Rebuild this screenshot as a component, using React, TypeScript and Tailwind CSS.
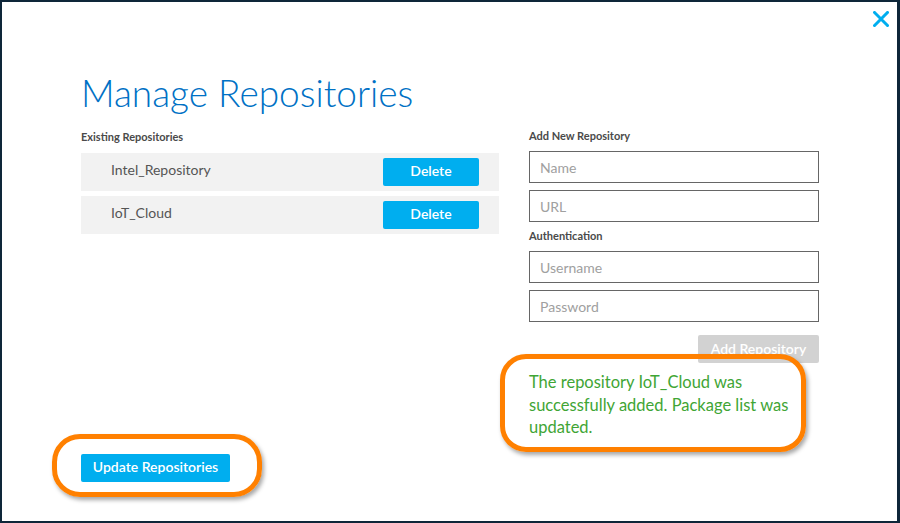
import React from "react";

const font = { fontFamily: "Lato, 'Open Sans', sans-serif" };

function Row({ name }: { name: string }) {
  return (
    <div className="flex h-[38px] items-center justify-between bg-[#f2f2f2] pl-[30px] pr-[20px]">
      <span className="-mt-[6px] text-[14px] text-[#555555]">{name}</span>
      <button className="h-[28px] w-[96px] rounded-[2px] bg-[#00aeef] pb-[3px] text-[14px] font-semibold text-white">
        Delete
      </button>
    </div>
  );
}

function Field({ placeholder }: { placeholder: string }) {
  return (
    <div className="flex h-[32px] items-center border border-[#666666] px-[10px] text-[14px] text-[#a0a0a0]">
      {placeholder}
    </div>
  );
}

export default function App() {
  return (
    <div className="relative h-[523px] w-[900px] bg-[#0e2639] pb-[2px] pl-[2px] pr-[3px] pt-[2px]" style={font}>
      <div className="flex h-full flex-col bg-white pb-[39px] pl-[79px] pt-[69px]">
        <h1 className="text-[37px] font-light leading-[44px] text-[#0071c5]">Manage Repositories</h1>
        <div className="mt-[14px] flex gap-[30px]">
          <div className="w-[418px]">
            <div className="text-[11px] font-bold leading-[16px] text-[#4a4a4a]">Existing Repositories</div>
            <div className="mt-[8px] flex flex-col gap-[5px]">
              <Row name="Intel_Repository" />
              <Row name="IoT_Cloud" />
            </div>
          </div>
          <div className="-mt-[1px] w-[290px]">
            <div className="text-[11px] font-bold leading-[16px] text-[#4a4a4a]">Add New Repository</div>
            <div className="mt-[7px] flex flex-col gap-[7px]">
              <Field placeholder="Name" />
              <Field placeholder="URL" />
            </div>
            <div className="mt-[6px] text-[11px] font-bold leading-[16px] text-[#4a4a4a]">Authentication</div>
            <div className="mt-[7px] flex flex-col gap-[7px]">
              <Field placeholder="Username" />
              <Field placeholder="Password" />
            </div>
            <div className="mt-[13px] flex justify-end">
              <button className="h-[28px] w-[121px] rounded-[2px] bg-[#d2d2d2] pb-[2px] text-[14px] font-semibold text-white">
                Add Repository
              </button>
            </div>
            <p className="mt-[8px] w-[268px] text-[16.5px] leading-[22.5px] text-[#3fa535]">
              The repository IoT_Cloud was successfully added. Package list was updated.
            </p>
          </div>
        </div>
        <div className="mt-auto">
          <button className="h-[28px] w-[149px] rounded-[2px] bg-[#00aeef] pb-[3px] text-[14px] font-semibold text-white">
            Update Repositories
          </button>
        </div>
      </div>

      <svg className="absolute left-[873px] top-[11px]" width="16" height="16" viewBox="0 0 16 16">
        <path d="M1.5 1.5 L14.5 14.5 M14.5 1.5 L1.5 14.5" stroke="#00aeef" strokeWidth="3" strokeLinecap="square" />
      </svg>

      <div className="pointer-events-none absolute left-[500px] top-[354px] h-[98px] w-[306px] rounded-[26px] border-[5px] border-[#ff8000] shadow-[2px_3px_4px_rgba(0,0,0,0.35)]" />
      <div className="pointer-events-none absolute left-[52px] top-[434px] h-[63px] w-[210px] rounded-[28px] border-[5px] border-[#ff8000] shadow-[2px_3px_4px_rgba(0,0,0,0.35)]" />
    </div>
  );
}
